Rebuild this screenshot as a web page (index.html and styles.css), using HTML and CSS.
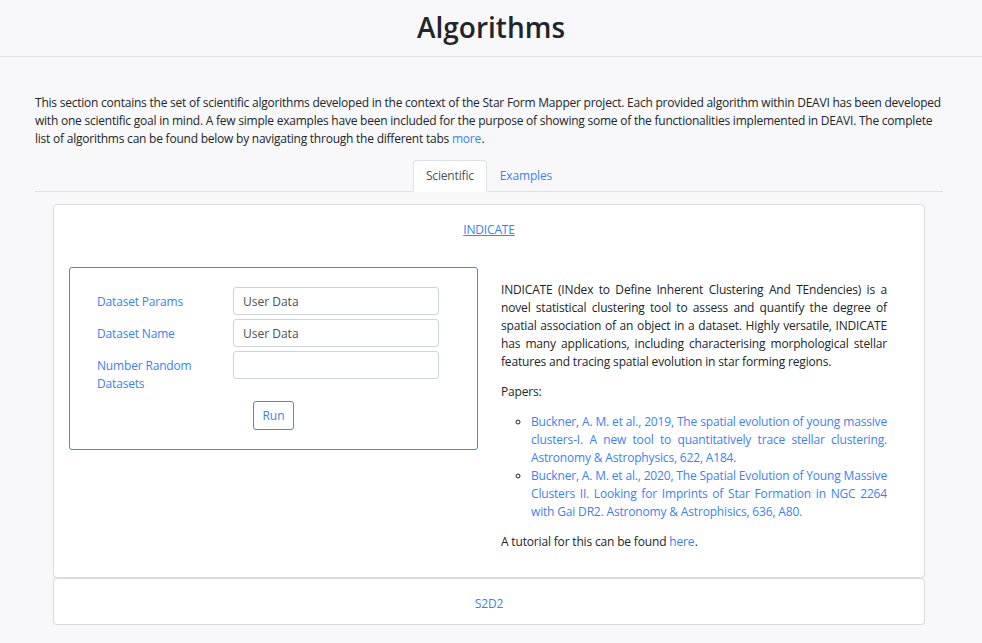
FILE: index.html
```html
<!DOCTYPE html>
<html>
<head>
<meta charset="utf-8">
<link rel="stylesheet" href="styles.css">
</head>
<body>
<header class="page-header">
  <h1 class="title">Algorithms</h1>
</header>
<main class="container">
  <p class="intro">This section contains the set of scientific algorithms developed in the context of the Star Form Mapper project. Each provided algorithm within DEAVI has been developed with one scientific goal in mind. A few simple examples have been included for the purpose of showing some of the functionalities implemented in DEAVI. The complete list of algorithms can be found below by navigating through the different tabs <a href="#" class="link">more</a><span class="stop">.</span></p>
  <nav class="tabs">
    <a href="#" class="tab active">Scientific</a>
    <a href="#" class="tab">Examples</a>
  </nav>
  <section class="cards">
    <div class="card">
      <div class="card-head"><a href="#" class="card-title">INDICATE</a></div>
      <div class="card-body">
        <form class="algo-form">
          <div class="form-row">
            <label class="form-label">Dataset Params</label>
            <input class="form-input" type="text" value="User Data">
          </div>
          <div class="form-row">
            <label class="form-label">Dataset Name</label>
            <input class="form-input" type="text" value="User Data">
          </div>
          <div class="form-row">
            <label class="form-label">Number Random Datasets</label>
            <input class="form-input" type="text" value="">
          </div>
          <div class="form-actions">
            <button type="button" class="btn-run">Run</button>
          </div>
        </form>
        <div class="desc">
          <p class="desc-p">INDICATE (INdex to Define Inherent Clustering And TEndencies) is a novel statistical clustering tool to assess and quantify the degree of spatial association of an object in a dataset. Highly versatile, INDICATE has many applications, including characterising morphological stellar features and tracing spatial evolution in star forming regions.</p>
          <p class="desc-p">Papers:</p>
          <ul class="papers">
            <li><a href="#" class="link">Buckner, A. M. et al., 2019, The spatial evolution of young massive clusters-I. A new tool to quantitatively trace stellar clustering. Astronomy &amp; Astrophysics, 622, A184.</a></li>
            <li><a href="#" class="link">Buckner, A. M. et al., 2020, The Spatial Evolution of Young Massive Clusters II. Looking for Imprints of Star Formation in NGC 2264 with Gai DR2. Astronomy &amp; Astrophisics, 636, A80.</a></li>
          </ul>
          <p class="desc-p last">A tutorial for this can be found <a href="#" class="link">here</a><span class="stop">.</span></p>
        </div>
      </div>
    </div>
    <div class="card card-collapsed">
      <div class="card-head small"><a href="#" class="card-title plain">S2D2</a></div>
    </div>
  </section>
</main>
</body>
</html>
```
FILE: styles.css
```css
* { box-sizing: border-box; }
html, body { margin: 0; padding: 0; }
body {
  background: #f8f8fa;
  font-family: "Open Sans", "Noto Sans", sans-serif;
  font-size: 12px;
  letter-spacing: -0.17px;
  line-height: 18px;
  color: #212529;
}
.page-header {
  height: 57px;
  border-bottom: 1px solid #dee2e6;
  display: flex;
  align-items: center;
  justify-content: center;
}
.title {
  margin: 0;
  font-size: 28px;
  font-weight: 600;
  letter-spacing: 0;
  line-height: 34px;
  color: #212529;
  padding-bottom: 2px;
}
.container {
  padding: 37px 39px 0 35px;
}
.intro {
  margin: 0 0 12px 0;
  letter-spacing: -0.23px;
}
.link { color: #3d7ff5; text-decoration: none; }
.stop { letter-spacing: 0; margin-left: 0.5px; }
.tabs {
  display: flex;
  justify-content: center;
  border-bottom: 1px solid #dee2e6;
  height: 32px;
}
.tab {
  display: block;
  padding: 6px 12px 7px;
  color: #3d7ff5;
  text-decoration: none;
  border: 1px solid transparent;
  border-radius: 4px 4px 0 0;
  margin-bottom: -1px;
  line-height: 18px;
}
.tab.active {
  background: #fff;
  color: #495057;
  border-color: #dee2e6 #dee2e6 #fff;
}
.cards {
  margin: 12px 18px 0 18px;
}
.card {
  background: #fff;
  border: 1px solid #dcdcdc;
  border-radius: 4px;
  box-shadow: 0 1px 1px rgba(0,0,0,0.06);
}
.card-head {
  text-align: center;
  padding: 16px 0 0;
  height: 62px;
}
.card-head.small { height: 45px; padding-top: 16px; }
.card-title { color: #3d7ff5; text-decoration: underline; }
.card-title.plain { text-decoration: none; }
.card-body {
  display: flex;
  padding: 0 0 14px 15px;
}
.algo-form {
  width: 409px;
  height: 183px;
  border: 1px solid #4a86e8;
  border-radius: 3px;
  padding: 19px 38px 0 27px;
  flex: none;
}
.form-row {
  display: flex;
  align-items: flex-start;
  margin-bottom: 4px;
}
.form-label {
  width: 136px;
  color: #3d7ff5;
  padding-top: 6px;
  flex: none;
}
.form-input {
  width: 206px;
  height: 28px;
  border: 1px solid #ced4da;
  border-radius: 3px;
  padding: 0 9px;
  font: inherit;
  color: #495057;
  background: #fff;
}
.form-actions {
  display: flex;
  padding-left: 156px;
  margin-top: 8px;
}
.btn-run {
  width: 41px;
  height: 29px;
  font: inherit;
  color: #3d7ff5;
  background: #fff;
  border: 1px solid #4a86e8;
  border-radius: 3px;
  padding: 0;
}
.desc {
  width: 386px;
  margin-left: 23px;
  margin-top: 14px;
  text-align: justify;
}
.desc-p { margin: 0 0 12px 0; }
.papers {
  margin: 0 0 12px 0;
  padding-left: 30px;
  list-style: circle;
}
.card-collapsed { margin-top: 0; }
```
